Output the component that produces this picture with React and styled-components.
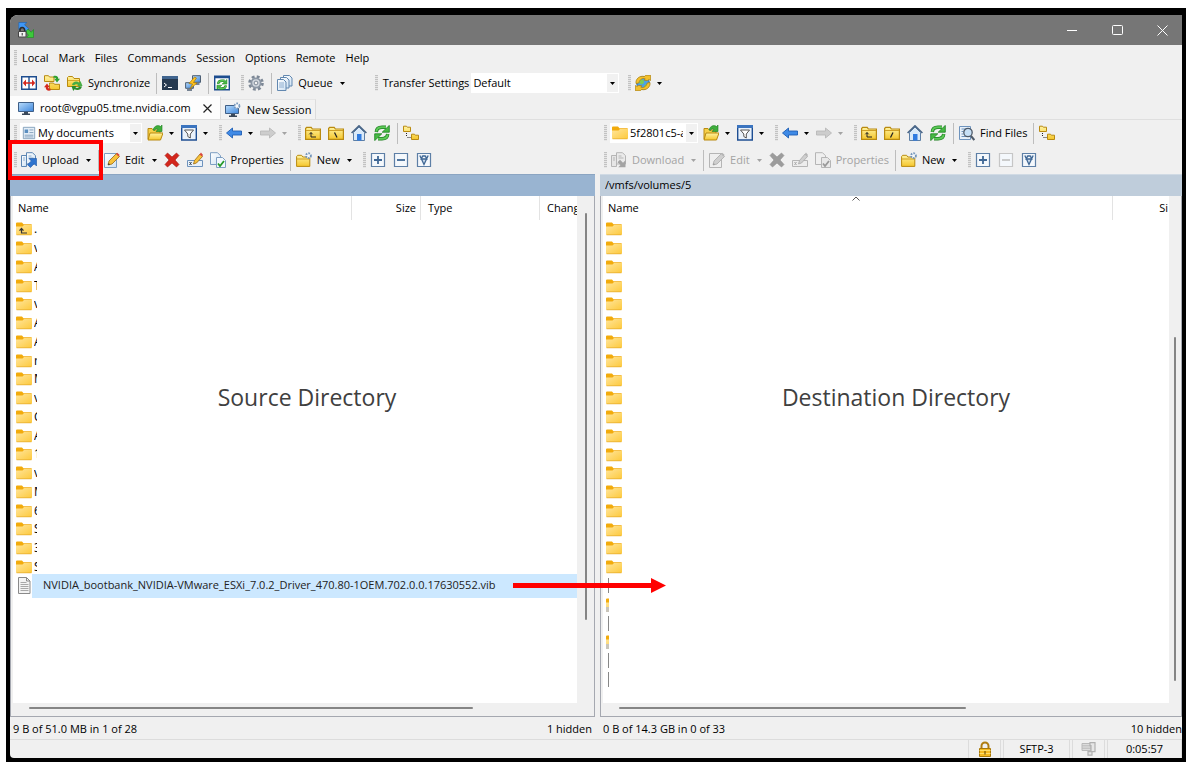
import React from "react";
import styled, { createGlobalStyle } from "styled-components";

const GlobalStyle = createGlobalStyle`
  * {
    box-sizing: border-box;
  }

  body {
    margin: 0;
    background: #fff;
    color: #000;
    font: 12px "Open Sans", "Noto Sans", sans-serif;
  }

  button,
  select {
    margin: 0;
    padding: 0;
    border: 0;
    background: none;
    color: inherit;
    font: inherit;
  }

  svg {
    display: block;
    flex: none;
  }
`;

const Page = styled.div`
  display: flex;
  min-height: 100vh;
  padding: 8px 5px 5px 6px;
`;

const Frame = styled.div`
  flex: 1;
  display: flex;
  min-width: 0;
  padding: 7px 4px 4px;
  background: #000;
`;

const Window = styled.main`
  flex: 1;
  display: flex;
  flex-direction: column;
  min-width: 0;
  border-radius: 8px 0 0 4px;
  background: #f0f0f0;
  font-size: 11px;
  line-height: 16px;
  white-space: nowrap;
`;

const TitleBar = styled.header`
  display: flex;
  align-items: center;
  justify-content: space-between;
  height: 30px;
  padding-left: 8px;
  border-radius: 8px 0 0;
  background: #767676;
`;

const WindowButtons = styled.div`
  display: flex;
  gap: 5px;
`;

const WindowButton = styled.button`
  display: flex;
  align-items: center;
  justify-content: center;
  width: 40px;
  height: 30px;
`;

const BarRow = styled.div`
  display: flex;
  align-items: center;
  gap: 3px;
  height: ${({ $height }) => $height || 26}px;
`;

const ToolGroup = styled.div`
  display: flex;
  align-items: center;
  margin-left: ${({ $indent }) => $indent || 0}px;
`;

const Grip = styled.span`
  width: 3px;
  height: 16px;
  margin: 0 1px 0 4px;
  background: repeating-linear-gradient(#c2c2c2 0 1px, #e6e6e6 1px 2px);
`;

const Separator = styled.span`
  width: 1px;
  height: 21px;
  margin: 0 2px 0 3px;
  background: #bdbdbd;
`;

const ToolButton = styled.button`
  display: flex;
  align-items: center;
  gap: 5px;
  height: 22px;
  padding: 0 ${({ $iconOnly }) => ($iconOnly ? 4 : 3)}px 0 3px;

  &:disabled {
    color: #a3a3a3;
  }
`;

const CaretBox = styled.span`
  display: flex;
  justify-content: center;
  width: 7px;
  margin-left: ${({ $wide }) => ($wide ? 1 : 0)}px;
`;

const Menu = styled.nav`
  display: flex;
  gap: 10px;
  padding-left: 4px;
`;

const TabBar = styled.div`
  display: flex;
  align-items: flex-end;
  height: 24px;
  border-bottom: 1px solid #dfdfdf;
`;

const Tab = styled.div`
  display: flex;
  align-items: center;
  height: ${({ $active }) => ($active ? 23 : 20)}px;
  padding: 0 ${({ $active }) => ($active ? 8 : 4)}px;
  border-right: 1px solid #dcdcdc;
  border-top: 1px solid ${({ $active }) => ($active ? "#fdfdfd" : "#e6e6e6")};
  background: ${({ $active }) => ($active ? "#fdfdfd" : "#f2f2f2")};
`;

const TabLabel = styled.button`
  display: flex;
  align-items: center;
  gap: 6px;
`;

const CloseTab = styled.button`
  margin-left: 12px;
`;

const ComboBox = styled.div`
  position: relative;
  display: flex;
  align-items: center;
  width: ${({ $width }) => $width}px;
  height: 20px;
  margin: 0 2px;
  padding-left: ${({ $icon }) => ($icon ? 2 : 0)}px;
  background: #fff;

  select {
    flex: 1;
    min-width: 0;
    height: 20px;
    margin-right: 15px;
    padding-left: 2px;
    appearance: none;
    overflow: hidden;
    text-overflow: clip;
  }
`;

const ComboArrow = styled.span`
  position: absolute;
  top: 1px;
  right: 1px;
  display: flex;
  align-items: center;
  justify-content: center;
  width: 11px;
  height: 18px;
  background: #f1f1f1;
  pointer-events: none;
`;

const UploadGroup = styled.span`
  position: relative;
  z-index: 2;
  display: flex;
  align-items: center;

  &::after {
    content: "";
    position: absolute;
    inset: -9px -8px -9px -10px;
    border: 4px solid #f00;
    pointer-events: none;
  }
`;

const Panes = styled.div`
  flex: 1;
  display: grid;
  grid-template-columns: 590fr 582fr;
  min-height: 0;
`;

const Pane = styled.section`
  position: relative;
  z-index: ${({ $front }) => ($front ? 1 : 0)};
  display: flex;
  flex-direction: column;
  min-width: 0;
`;

const PaneBody = styled.div`
  flex: 1;
  display: flex;
  flex-direction: column;
  margin-right: ${({ $gap }) => $gap}px;
`;

const PathBar = styled.div`
  height: 22px;
  padding: 2px 5px;
  border-top: 1px solid ${({ $active }) => ($active ? "#8ba5c2" : "#d0dae4")};
  background: ${({ $active }) => ($active ? "#99b4d1" : "#bfcddb")};
`;

const PathText = styled.span`
  display: block;
  width: 89px;
  overflow: hidden;
`;

const Listing = styled.div`
  flex: 1;
  display: grid;
  grid-template-columns: 1fr ${({ $track }) => $track}px;
  grid-template-rows: 1fr 13px;
  border: 1px solid #a5a8b0;
  border-width: 0 1px 1px;
`;

const Table = styled.table`
  display: flex;
  flex-direction: column;
  min-width: 0;
  margin-left: 2px;
  background: #fff;
`;

const HeadRow = styled.tr`
  display: flex;
  height: 24px;
`;

const HeadCell = styled.th`
  position: relative;
  flex: ${({ $width }) => ($width ? `0 0 ${$width}px` : 1)};
  overflow: hidden;
  padding: 4px ${({ $tight }) => ($tight ? 1 : 4)}px 4px ${({ $wide }) => ($wide ? 7 : 5)}px;
  border-right: ${({ $last }) => ($last ? 0 : 1)}px solid #e3e3e3;
  font-weight: 400;
  text-align: ${({ $align }) => $align || "left"};

  svg {
    position: absolute;
    top: 0;
    left: 49%;
  }
`;

const HeadSection = styled.thead`
  display: block;
`;

const Rows = styled.tbody`
  flex: 1;
  display: flex;
  flex-direction: column;
  padding-bottom: ${({ $space }) => $space}px;
`;

const Row = styled.tr`
  flex: 1;
  display: flex;
  align-items: center;
  height: 0;
`;

const NameCell = styled.td`
  flex: 1;
  display: flex;
  align-items: center;
  gap: 2px;
  min-width: 0;
  padding: 0 0 0 3px;
`;

const ClippedName = styled.span`
  width: 3px;
  overflow: hidden;
  font-size: 12px;
`;

const SelectedName = styled.span`
  position: relative;
  flex: 1;
  height: 24px;
  margin-left: -2px;
  padding: 3px 11px 5px;
  background: #cce8ff;
  color: #222;
`;

const TransferArrow = styled.svg`
  position: absolute;
  top: 4px;
  right: -89px;
`;

const CutIcon = styled.span`
  display: flex;
  justify-content: ${({ $bar }) => ($bar ? "flex-end" : "flex-start")};
  width: 3px;
  overflow: hidden;
`;

const CutEdge = styled.span`
  width: 1px;
  height: 15px;
  background: #888;
`;

const VerticalTrack = styled.div`
  padding-top: ${({ $start }) => $start}px;
`;

const VerticalThumb = styled.div`
  width: 2px;
  height: ${({ $size }) => $size}%;
  margin: 0 auto;
  border-radius: 1px;
  background: #858585;
`;

const HorizontalTrack = styled.div`
  display: flex;
  align-items: center;
  padding: 0 0 4px 18px;
`;

const HorizontalThumb = styled.div`
  width: ${({ $size }) => $size}%;
  height: 2px;
  border-radius: 1px;
  background: #858585;
`;

const Caption = styled.p`
  position: absolute;
  top: 260px;
  left: 10px;
  right: ${({ $gap }) => $gap}px;
  margin: 0;
  color: #404040;
  font-size: 23px;
  line-height: 34px;
  text-align: center;
  pointer-events: none;
`;

const PaneStatus = styled.div`
  display: flex;
  justify-content: space-between;
  height: 22px;
  padding: 4px ${({ $end }) => $end}px 2px 3px;
`;

const StatusBar = styled.footer`
  display: flex;
  justify-content: flex-end;
  gap: 2px;
  height: 19px;
  border-top: 1px solid #dcdcdc;
`;

const StatusCell = styled.div`
  display: flex;
  align-items: center;
  justify-content: center;
  width: ${({ $width }) => $width}px;
  border: 1px solid #dcdcdc;
  border-width: 0 1px;
`;

/* ---------- icons ---------- */

const Icon = ({ children, size = 16 }) => (
  <svg width={size} height={size} viewBox="0 0 16 16" fill="none" aria-hidden="true">
    {children}
  </svg>
);

const HiddenSvg = styled.svg`
  position: absolute;
`;

const Gradients = () => (
  <HiddenSvg width="0" height="0" aria-hidden="true">
    <defs>
      <linearGradient id="folder" x1="0" y1="0" x2="1" y2="1">
        <stop offset="0" stopColor="#ffe59b" />
        <stop offset="1" stopColor="#fdc93c" />
      </linearGradient>
      <linearGradient id="gold" x1="0" y1="0" x2="0" y2="1">
        <stop offset="0" stopColor="#fff3a0" />
        <stop offset="1" stopColor="#f5c62c" />
      </linearGradient>
      <linearGradient id="screen" x1="0" y1="0" x2="1" y2="1">
        <stop offset="0" stopColor="#b9dcfb" />
        <stop offset="1" stopColor="#3d86dc" />
      </linearGradient>
      <linearGradient id="paper" x1="0" y1="0" x2="1" y2="1">
        <stop offset="0" stopColor="#fff" />
        <stop offset="1" stopColor="#cfe2f3" />
      </linearGradient>
    </defs>
  </HiddenSvg>
);

const Caret = ({ color = "#000" }) => (
  <svg width="5" height="3" viewBox="0 0 5 3" aria-hidden="true">
    <path d="M0 0h5L2.500 3z" fill={color} />
  </svg>
);

const AppIcon = () => (
  <Icon>
    <path d="M.8.5h8L6.600 2.700 11 7 8.500 9.500 4 5 .8 7.500z" fill="#3f97f5" stroke="#1d5fb0" strokeWidth=".6" />
    <path d="M15.500 7.500v8h-7l2-2.300-2-2.200V8.500l1.500-1.300 3.300 3z" fill="#3cc93a" stroke="#1b8a1e" strokeWidth=".6" />
    <path d="M2 10V7.800a2.300 2.300 0 0 1 4.600 0V10" stroke="#2a2a2a" strokeWidth="1.500" />
    <path d="M.5 9.500h7.500v5.500H.5z" fill="#f2f2f2" stroke="#444" />
    <path d="M3.700 11h1v2.500h-1z" fill="#333" />
  </Icon>
);

const Minimize = () => (
  <svg width="10" height="10"><path d="M0 5.500h10" stroke="#fff" /></svg>
);
const Maximize = () => (
  <svg width="11" height="11"><rect x=".5" y=".5" width="10" height="9" rx="1" fill="none" stroke="#fff" /></svg>
);
const Close = () => (
  <svg width="11" height="11"><path d="M.5.5l10 10m0-10l-10 10" stroke="#fff" /></svg>
);
const CloseMark = () => (
  <svg width="9" height="9"><path d="M.5.5l8 8m0-8l-8 8" stroke="#222" strokeWidth="1.200" /></svg>
);

const Compare = () => (
  <Icon>
    <path d="M.7 1.700h14.600v12.600H.7z" fill="#fff" stroke="#1d4d8f" strokeWidth="1.400" />
    <path d="M8 1v14" stroke="#1d4d8f" strokeWidth="1.400" />
    <path d="M1.800 8L5 4.500v2.700h6V4.500L14.200 8 11 11.500V8.800H5v2.700z" fill="#d5281c" />
  </Icon>
);

const SyncBrowse = () => (
  <Icon>
    <path d="M.5 2V.7h4l1 1.300H10v4.500H.5zM5.500 9.500V8h4l1 1.300h5v5.200h-10z" fill="url(#gold)" stroke="#b98a10" />
    <path d="M9.500 1c3.500-.8 5 .8 4.700 2.800H16L13 7.500l-2.800-3.700H12c0-.8-.8-1.200-2.500-1z" fill="#2fa12f" />
    <path d="M6.500 15.500c-3.500.6-5-1-4.700-3.300H0l3-3.700 2.800 3.700H4c0 .9.800 1.300 2.500 1.200z" fill="#d5281c" />
  </Icon>
);

const Synchronize = () => (
  <Icon>
    <path d="M.5 11.500v-9l1-1h4l1.500 2h5.500v8z" fill="url(#gold)" stroke="#b98a10" />
    <path d="M1 5.500h11" stroke="#d9a92a" />
    <path d="M5 10c.5-3.200 4.500-4.500 7.300-2.300L13.500 6l2 5h-5.300l1-1.300C9.700 8.800 8 9 7.200 10.300z" fill="#48ad45" />
    <path d="M15 11.500c-.8 3.300-4.500 4.600-7.500 2.800L6.200 16 4.500 11h5l-1 1.500c1.600.8 3 .4 4-1.200z" fill="#2b8b2b" />
  </Icon>
);

const Terminal = () => (
  <Icon>
    <path d="M0 1h16v14H0z" fill="#26394f" />
    <path d="M0 1h16v3H0z" fill="#41658f" />
    <path d="M2 8l2.500 2L2 12M6 12.500h4" stroke="#fff" />
  </Icon>
);

const Putty = () => (
  <Icon>
    <path d="M7.500.7h8v6.600h-8z" fill="url(#screen)" stroke="#4d5f74" />
    <path d="M.6 7.700h7.800v5.600H.6z" fill="url(#screen)" stroke="#4d5f74" />
    <path d="M2 15h5M10.500 9h4" stroke="#4d5f74" strokeWidth="1.500" />
    <path d="M9.500 2L4 8.500l3.500.5L5 14l7-6-3.500-.5L11.500 3z" fill="#ffc31e" stroke="#a8780a" strokeWidth=".7" />
  </Icon>
);

const Refresh = ({ boxed }) => (
  <Icon>
    {boxed && <path d="M.7 1.200h14.600v13.600H.7z" fill="#fff" stroke="#1d4d8f" strokeWidth="1.400" />}
    {boxed && <path d="M.7 2.500h14.600" stroke="#1d4d8f" strokeWidth="1.500" />}
    <g transform={boxed ? "translate(2.500 4.200) scale(.68)" : undefined}>
      <path d="M2.300 7C2.600 3.500 5 2.300 8 2.300h4M13.700 9c-.3 3.500-2.700 4.700-5.700 4.700H4" stroke="#1c7f1f" strokeWidth="3.400" />
      <path d="M15.300.4v6.800H8.200zM.7 15.600V8.800h7.100z" fill="#46ba43" stroke="#1c7f1f" strokeWidth=".8" />
      <path d="M2.300 6.600C2.600 3.500 5 2.300 8 2.300h4M13.700 9.400c-.3 3.100-2.700 4.300-5.700 4.300H4" stroke="#5cc957" strokeWidth="2" />
    </g>
  </Icon>
);

const Gear = () => (
  <Icon>
    <circle cx="8" cy="8" r="6.400" stroke="#7d8896" strokeWidth="2.800" strokeDasharray="2.800 2.226" />
    <circle cx="8" cy="8" r="4.600" fill="#d3d9e0" stroke="#8c97a5" strokeWidth="1.800" />
    <circle cx="8" cy="8" r="1.900" fill="#f3f3f3" stroke="#7d8896" />
  </Icon>
);

const Queue = () => (
  <Icon>
    <path d="M6.500.5h6l2.500 2.500v8H6.500z" fill="url(#paper)" stroke="#6288b0" />
    <path d="M3.500 2.500h6L12 5v8H3.500z" fill="url(#paper)" stroke="#6288b0" />
    <path d="M.5 4.500h6L9 7v8.500H.5z" fill="url(#paper)" stroke="#6288b0" />
    <path d="M2 8h5M2 10h5M2 12h5" stroke="#8eaed0" />
  </Icon>
);

const GlobeSync = () => (
  <Icon>
    <circle cx="8" cy="8" r="6.300" fill="#4aa0ea" stroke="#2b6cae" />
    <path d="M5.500 4.500l3 .5.500 3-2.500 1.500L4 8zM9.500 10l3-1-1 3-2 1z" fill="#7ccc55" />
    <path d="M1 8.500C.3 4 4.500.3 9.500 1.500L10.500.3h5.200v5.200l-1.700-1-1.300 1-3.500-.2 1-1.500C7.500 2.700 4.500 4.500 3.800 8z" fill="#f3c02c" stroke="#a87c0c" strokeWidth=".7" />
    <path d="M15 7.500c.7 4.500-3.500 8.200-8.500 7l-1 1.200H.3v-5.200l1.700 1 1.300-1 3.500.2-1 1.500c2.700 1.100 5.700-.7 6.400-4.200z" fill="#f3c02c" stroke="#a87c0c" strokeWidth=".7" />
  </Icon>
);

const Monitor = ({ spark }) => (
  <Icon>
    <path d={spark ? "M.5 3.500h13v8H.5z" : "M.5 2.500h15v9H.5z"} fill="url(#screen)" stroke="#3f5f87" />
    <path d="M6 12h4v1.500h2V15H4v-1.500h2z" fill="#3a4859" />
    {spark && <circle cx="12" cy="4" r="2.500" fill="#f6f9fc" stroke="#7596bb" strokeWidth="1.800" strokeDasharray="1.600 1.100" />}
  </Icon>
);

const Documents = () => (
  <Icon size={14}>
    <path d="M1.500 1.500h13v13h-13z" fill="#e4eef7" stroke="#7e9cb8" />
    <path d="M3 4h4v4H3z" fill="#5b8fc0" />
    <path d="M8.500 4.500H13M8.500 7.500H13M3 10.500h10M3 12.500h10" stroke="#7e9cb8" />
  </Icon>
);

const OpenFolder = () => (
  <Icon>
    <path d="M1 14V3.500h4l1.500 1.500H13v9z" fill="#f6cf48" stroke="#b98a10" />
    <path d="M1 15l2-7h13l-2.500 7z" fill="url(#gold)" stroke="#b98a10" />
    <path d="M6 5c1-4 5-5.500 7.500-3.500L15 0v6.500H9l2-2C9.500 3.500 8 4 7.500 5.500z" fill="#3fae3c" stroke="#1f7f22" strokeWidth=".6" />
  </Icon>
);

const Filter = () => (
  <Icon>
    <path d="M.7 1h14.600v14H.7z" fill="#eaf2fb" stroke="#1f4f93" strokeWidth="1.400" />
    <path d="M0 1.500h16" stroke="#3b74bf" strokeWidth="3" />
    <path d="M3.500 5h9L9.300 9v4l-2.500-1.500V9z" fill="#fff" stroke="#555" />
  </Icon>
);

const Arrow = ({ forward }) => (
  <Icon>
    <path
      d={forward ? "M15.500 8L9.500 3v3H.5v4h9v3z" : "M.5 8l6-5v3h9v4h-9v3z"}
      fill={forward ? "#cdcdcd" : "#3f8ae6"}
      stroke={forward ? "#b9b9b9" : "#1f5fb4"}
      strokeWidth=".9"
    />
  </Icon>
);

const PathFolder = ({ sign }) => (
  <Icon>
    <path d="M.6 14.400V3.500l1-1.200h4.600l1.200 1.700h8v10.400z" fill="url(#gold)" stroke="#b98a10" strokeWidth="1.200" />
    <path d="M1 5.500h14" stroke="#cfa026" />
    {sign === "up" && <path d="M6 7.500v4.500h5M4.300 9.300L6 7.600l1.700 1.700" stroke="#222" />}
    {sign === "\\" && <path d="M6.500 7.500l2.500 5" stroke="#222" strokeWidth="1.200" />}
    {sign === "/" && <path d="M9 7.500l-2.500 5" stroke="#222" strokeWidth="1.200" />}
  </Icon>
);

const Home = () => (
  <Icon>
    <path d="M2.500 7.500L8 2l5.500 5.500v8h-11z" fill="#d9e9f8" stroke="#5d7fa6" />
    <path d="M.6 8L8 .9 15.400 8" stroke="#4b6788" strokeWidth="1.700" />
    <path d="M6 9h4.500v6.500H6z" fill="#2f7be0" />
  </Icon>
);

const Tree = () => (
  <Icon>
    <path d="M.5 6.500V1.200h3l.8 1h3.200v4.300zM8.500 14.500V9.200h3l.8 1h3.200v4.300z" fill="url(#gold)" stroke="#b98a10" />
    <path d="M3.500 8v4M4.500 12.500H8" stroke="#222" strokeDasharray="1 1" />
  </Icon>
);

const FindFiles = () => (
  <Icon>
    <path d="M.5 1.500h11v13H.5z" fill="#e8f1fa" stroke="#6e93bd" />
    <path d="M2.500 4h7M2.500 6.500h2M2.500 9h2M2.500 11.500h6" stroke="#6e93bd" />
    <circle cx="9" cy="7.500" r="4.200" fill="#c7e0f6" stroke="#4e5a69" strokeWidth="1.300" />
    <path d="M12 11l3.300 4" stroke="#4e5a69" strokeWidth="2" />
  </Icon>
);

const tone = (off, color) => (off ? "#b5b5b5" : color);

const Transfer = ({ off }) => (
  <Icon>
    <path d="M.5 3.500h5v11h-5z" fill={off ? "#e6e6e6" : "url(#paper)"} stroke={tone(off, "#5c86b3")} />
    <path d="M5.500.7h6l3 3V12h-9z" fill={off ? "#eaeaea" : "url(#paper)"} stroke={tone(off, "#5c86b3")} />
    <path d="M2 6h2M2 8h2M7.500 4h3M7.500 6h5" stroke={tone(off, "#8eaed0")} />
    {off ? (
      <path d="M14.500 15.300H7.200l2.300-2.300-3-2.800L9 7.700l3 3 2.500-2.500z" fill="#a4a4a4" />
    ) : (
      <path d="M15.500 6.500V14l-2.300-2.300-3.700 3.800-3-2.800 3.800-3.700L8 6.500z" fill="#2f74cf" stroke="#1d55a3" strokeWidth=".6" />
    )}
  </Icon>
);

const Edit = ({ off }) => (
  <Icon>
    <path d="M.5 1.500h12v14H.5z" fill={off ? "#efefef" : "url(#paper)"} stroke={tone(off, "#7d9ec2")} />
    <path d="M4 13l1-4 7.500-7.500 3 3L8 12z" fill={off ? "#cfcfcf" : "#f7c23c"} stroke={off ? "#aaa" : "#9b6a12"} strokeWidth=".8" />
    <path d="M12 2l1.300-1.300 2.400 2.400L14.400 4.500z" fill={tone(off, "#d8473c")} />
    <path d="M4 13l.6-2 1.500 1.400z" fill={off ? "#999" : "#333"} />
  </Icon>
);

const Delete = ({ off }) => (
  <Icon>
    <path
      d="M1 3.500L3.500 1 8 5l4.500-4L15 3.500 11 8l4 4.500-2.500 2.500L8 11l-4.500 4L1 12.500 5 8z"
      fill={off ? "#9c9c9c" : "#d3261c"}
      stroke={off ? "#8f8f8f" : "#a3140d"}
      strokeWidth=".6"
    />
  </Icon>
);

const Rename = ({ off }) => (
  <Icon>
    <path d="M.5 8.500h15v6H.5z" fill={off ? "#ededed" : "#e8f1fa"} stroke={tone(off, "#6e93bd")} />
    <path d="M2.500 10l2 3m0-3l-2 3" stroke={off ? "#aaa" : "#345"} />
    <path d="M6.500 12l1-3.500L13 2l2.500 2.500-6 6.500z" fill={off ? "#cfcfcf" : "#f7c23c"} stroke={off ? "#aaa" : "#9b6a12"} strokeWidth=".8" />
    <path d="M12.500 2.500L14 .5 16 3l-1 1.500z" fill={tone(off, "#d8473c")} />
  </Icon>
);

const Properties = ({ off }) => (
  <Icon>
    <path d="M.5.7h7l3 3v8.800H.5z" fill={off ? "#efefef" : "url(#paper)"} stroke={tone(off, "#7d9ec2")} />
    <path d="M6.500 5.500h6l3 3v7h-9z" fill={off ? "#e8e8e8" : "#f2f8fd"} stroke={tone(off, "#7d9ec2")} />
    <path d="M8 11.500l2 2.500 4-5" stroke={off ? "#999" : "#259a28"} strokeWidth="1.800" />
  </Icon>
);

const NewItem = () => (
  <Icon>
    <path d="M.6 14.400V4.500l1-1.200h4l1.200 1.700h7v9.400z" fill="url(#gold)" stroke="#b98a10" />
    <path d="M1 7h12.500" stroke="#cfa026" />
    <circle cx="12.500" cy="3.700" r="2.400" fill="#f6f9fc" stroke="#7596bb" strokeWidth="1.900" strokeDasharray="1.500 1" />
  </Icon>
);

const SelectBox = ({ kind, off }) => (
  <Icon>
    <path d="M1.500 1.500h13v13h-13z" fill="#f4f8fc" stroke={off ? "#c6c6c6" : "#5d7fa6"} strokeWidth="1.200" />
    {kind === "plus" && <path d="M8 4v8M4 8h8" stroke="#3f6795" strokeWidth="1.800" />}
    {kind === "minus" && <path d="M4 8h8" stroke={off ? "#c6c6c6" : "#3f6795"} strokeWidth="1.800" />}
    {kind === "invert" && (
      <path d="M3.800 3.500L8 12.500l4.200-9M5.200 7l1.600-3h2.400l1.600 3z" fill="#c9d9ea" stroke="#3f6795" strokeWidth="1.300" />
    )}
  </Icon>
);

const Folder = ({ up, linked }) => (
  <svg width="16" height="14" viewBox="0 0 16 14" fill="none" aria-hidden="true">
    <path d="M0 1.500Q0 .5 1 .5h5l1.500 1.700H15q1 0 1 1V5H0z" fill="#f2ab0c" />
    <path d="M0 4.500h6.500L8 3h8v9q0 1-1 1H1q-1 0-1-1z" fill="url(#folder)" />
    <path d="M.5 12.800h15" stroke="#e5ab2a" strokeWidth=".7" />
    {up && <path d="M5.500 6.500V11H11M3.500 8.700l2-2.200 2 2.200" stroke="#333" strokeWidth="1.200" />}
    {linked && <path d="M0 9h4v5H0z" fill="#c9c5ba" />}
  </svg>
);

const FileIcon = () => (
  <svg width="16" height="17" viewBox="-1 0 16 17" fill="none" aria-hidden="true">
    <path d="M1.500.5h8l3.500 3.500v12.500H1.500z" fill="#f3f3f3" stroke="#8a8a8a" />
    <path d="M9.500.5V4H13" stroke="#8a8a8a" />
    <path d="M3.500 5.500h6M3.500 7.500h8M3.500 9.500h8M3.500 11.500h8M3.500 13.500h8" stroke="#a8a8a8" />
  </svg>
);

const Lock = () => (
  <Icon>
    <path d="M4.500 8V5a3.500 3.500 0 0 1 7 0v3" stroke="#b07d10" strokeWidth="2" />
    <path d="M2.500 7.500h11v8h-11z" fill="#f5b921" stroke="#a87808" />
    <path d="M2.500 9.500h11M2.500 12.500h11" stroke="#ffdd6b" />
    <path d="M7.500 10h1v3.500h-1z" fill="#5b3f00" />
  </Icon>
);

const Compression = () => (
  <Icon>
    <path d="M1 2.500h9v7H1z" fill="#dcdcdc" stroke="#b9b9b9" />
    <path d="M1 4.800h9M1 7.200h9" stroke="#b9b9b9" />
    <path d="M9 1.700h5v9h-3v3.500H7v-3.500h3v-6H9z" fill="#e6e6e6" stroke="#b0b0b0" strokeWidth="1.200" />
  </Icon>
);

/* ---------- parts ---------- */

const Tool = ({ icon, label, text, caret, disabled }) => (
  <ToolButton type="button" aria-label={label} disabled={disabled} $iconOnly={!text && !caret}>
    {icon}
    {text}
    {caret && (
      <CaretBox $wide={text}>
        <Caret color={disabled ? "#a3a3a3" : "#000"} />
      </CaretBox>
    )}
  </ToolButton>
);

const Combo = ({ id, icon, label, value, width }) => (
  <ComboBox $width={width} $icon={icon}>
    {icon}
    <select id={id} aria-label={label} defaultValue={value}>
      <option>{value}</option>
    </select>
    <ComboArrow>
      <Caret />
    </ComboArrow>
  </ComboBox>
);

const PaneToolbars = ({ remote, location, locationIcon, locationWidth }) => (
  <>
    <BarRow>
      <ToolGroup>
        <Grip />
        <Combo label="Location" icon={locationIcon} value={location} width={locationWidth} />
        <Tool label="Open directory" icon={<OpenFolder />} caret />
        <Tool label="Filter" icon={<Filter />} caret />
      </ToolGroup>
      <ToolGroup>
        <Grip />
        <Tool label="Back" icon={<Arrow />} caret />
        <Tool label="Forward" icon={<Arrow forward />} caret disabled />
      </ToolGroup>
      <ToolGroup>
        <Grip />
        <Tool label="Parent directory" icon={<PathFolder sign="up" />} />
        <Tool label="Root directory" icon={<PathFolder sign={remote ? "/" : "\\"} />} />
        <Tool label="Home directory" icon={<Home />} />
        <Tool label="Refresh" icon={<Refresh />} />
        <Separator />
        {remote && (
          <>
            <Tool text="Find Files" icon={<FindFiles />} />
            <Separator />
          </>
        )}
        <Tool label="Tree" icon={<Tree />} />
      </ToolGroup>
    </BarRow>
    <BarRow $height={28}>
      <ToolGroup>
        <Grip />
        {remote ? (
          <Tool text="Download" icon={<Transfer off />} caret disabled />
        ) : (
          <UploadGroup>
            <Tool text="Upload" icon={<Transfer />} caret />
          </UploadGroup>
        )}
        <Separator />
        <Tool text="Edit" icon={<Edit off={remote} />} caret disabled={remote} />
        <Tool label="Delete" icon={<Delete off={remote} />} disabled={remote} />
        <Tool label="Rename" icon={<Rename off={remote} />} disabled={remote} />
        <Tool text="Properties" icon={<Properties off={remote} />} disabled={remote} />
        <Separator />
        <Tool text="New" icon={<NewItem />} caret />
      </ToolGroup>
      <ToolGroup>
        <Grip />
        <Tool label="Select files" icon={<SelectBox kind="plus" />} />
        <Tool label="Unselect files" icon={<SelectBox kind="minus" off={remote} />} disabled={remote} />
        <Tool label="Invert selection" icon={<SelectBox kind="invert" />} />
      </ToolGroup>
    </BarRow>
  </>
);

const menuItems = ["Local", "Mark", "Files", "Commands", "Session", "Options", "Remote", "Help"];

const localNames = [
  ".", "v", "A", "T", "v", "A", "A", "r", "M", "v",
  "C", "A", "1", "v", "M", "6", "S", "3", "S",
];

const remoteRows = [...Array(19).fill("folder"), "edge", "link", "edge", "link", "edge", "edge"];

const LocalTable = () => (
  <Table>
    <HeadSection>
      <HeadRow>
        <HeadCell>Name</HeadCell>
        <HeadCell $width={69} $align="right">Size</HeadCell>
        <HeadCell $width={119} $wide>Type</HeadCell>
        <HeadCell $width={37} $last $tight $wide>Changed</HeadCell>
      </HeadRow>
    </HeadSection>
    <Rows $space={108}>
      {localNames.map((name, i) => (
        <Row key={i}>
          <NameCell>
            <Folder up={i === 0} />
            <ClippedName>{name}</ClippedName>
          </NameCell>
        </Row>
      ))}
      <Row>
        <NameCell>
          <FileIcon />
          <SelectedName>
            NVIDIA_bootbank_NVIDIA-VMware_ESXi_7.0.2_Driver_470.80-1OEM.702.0.0.17630552.vib
            <TransferArrow width="153" height="15" viewBox="0 0 153 15">
              <path d="M0 5h138V0l15 7.500L138 15v-5H0z" fill="#f00" />
            </TransferArrow>
          </SelectedName>
        </NameCell>
      </Row>
    </Rows>
  </Table>
);

const RemoteTable = () => (
  <Table>
    <HeadSection>
      <HeadRow>
        <HeadCell>
          Name
          <svg width="8" height="5">
            <path d="M.5 4.500L4 1l3.500 3.500" fill="none" stroke="#555" />
          </svg>
        </HeadCell>
        <HeadCell $width={56} $last $tight $align="right">Si</HeadCell>
      </HeadRow>
    </HeadSection>
    <Rows $space={14}>
      {remoteRows.map((kind, i) => (
        <Row key={i}>
          <NameCell>
            {kind === "folder" && <Folder />}
            {kind === "link" && <CutIcon><Folder linked /></CutIcon>}
            {kind === "edge" && <CutIcon $bar><CutEdge /></CutIcon>}
          </NameCell>
        </Row>
      ))}
    </Rows>
  </Table>
);

const App = () => (
  <Page>
    <GlobalStyle />
    <Gradients />
    <Frame>
      <Window>
        <TitleBar>
          <AppIcon />
          <WindowButtons>
            <WindowButton aria-label="Minimize"><Minimize /></WindowButton>
            <WindowButton aria-label="Maximize"><Maximize /></WindowButton>
            <WindowButton aria-label="Close"><Close /></WindowButton>
          </WindowButtons>
        </TitleBar>
        <BarRow $height={25}>
          <ToolGroup>
            <Grip />
            <Menu>
              {menuItems.map((item) => (
                <button key={item} type="button">{item}</button>
              ))}
            </Menu>
          </ToolGroup>
        </BarRow>
        <BarRow>
          <ToolGroup>
            <Grip />
            <Tool label="Compare directories" icon={<Compare />} />
            <Tool label="Synchronize browsing" icon={<SyncBrowse />} />
            <Tool text="Synchronize" icon={<Synchronize />} />
            <Separator />
            <Tool label="Console" icon={<Terminal />} />
            <Tool label="Open in PuTTY" icon={<Putty />} />
            <Separator />
            <Tool label="Keep remote up to date" icon={<Refresh boxed />} />
          </ToolGroup>
          <ToolGroup>
            <Grip />
            <Tool label="Preferences" icon={<Gear />} />
            <Separator />
            <Tool text="Queue" icon={<Queue />} caret />
          </ToolGroup>
          <ToolGroup $indent={19}>
            <Grip />
            <Menu as="label" htmlFor="transfer-settings">Transfer Settings</Menu>
            <Combo id="transfer-settings" value="Default" width={148} />
          </ToolGroup>
          <ToolGroup>
            <Grip />
            <Tool label="Site" icon={<GlobeSync />} caret />
          </ToolGroup>
        </BarRow>
        <TabBar>
          <Tab $active>
            <TabLabel type="button">
              <Monitor />
              root@vgpu05.tme.nvidia.com
            </TabLabel>
            <CloseTab type="button" aria-label="Close tab"><CloseMark /></CloseTab>
          </Tab>
          <Tab>
            <TabLabel type="button">
              <Monitor spark />
              New Session
            </TabLabel>
          </Tab>
        </TabBar>
        <Panes>
          <Pane $front>
            <PaneToolbars location="My documents" locationIcon={<Documents />} locationWidth={122} />
            <PaneBody $gap={5}>
              <PathBar $active />
              <Listing $track={17}>
                <LocalTable />
                <VerticalTrack $start={17}>
                  <VerticalThumb $size={83} />
                </VerticalTrack>
                <HorizontalTrack>
                  <HorizontalThumb $size={81} />
                </HorizontalTrack>
              </Listing>
              <PaneStatus $end={3}>
                <span>9 B of 51.0 MB in 1 of 28</span>
                <span>1 hidden</span>
              </PaneStatus>
            </PaneBody>
            <Caption $gap={6}>Source Directory</Caption>
          </Pane>
          <Pane>
            <PaneToolbars remote location="5f2801c5-a" locationIcon={<Folder />} locationWidth={88} />
            <PaneBody $gap={0}>
              <PathBar>
                <PathText>/vmfs/volumes/5</PathText>
              </PathBar>
              <Listing $track={12}>
                <RemoteTable />
                <VerticalTrack $start={141}>
                  <VerticalThumb $size={94} />
                </VerticalTrack>
                <HorizontalTrack>
                  <HorizontalThumb $size={63} />
                </HorizontalTrack>
              </Listing>
              <PaneStatus $end={0}>
                <span>0 B of 14.3 GB in 0 of 33</span>
                <span>10 hidden</span>
              </PaneStatus>
            </PaneBody>
            <Caption $gap={0}>Destination Directory</Caption>
          </Pane>
        </Panes>
        <StatusBar>
          <StatusCell $width={33}><Lock /></StatusCell>
          <StatusCell $width={67}>SFTP-3</StatusCell>
          <StatusCell $width={33}><Compression /></StatusCell>
          <StatusCell $width={75}>0:05:57</StatusCell>
        </StatusBar>
      </Window>
    </Frame>
  </Page>
);

export default App;
